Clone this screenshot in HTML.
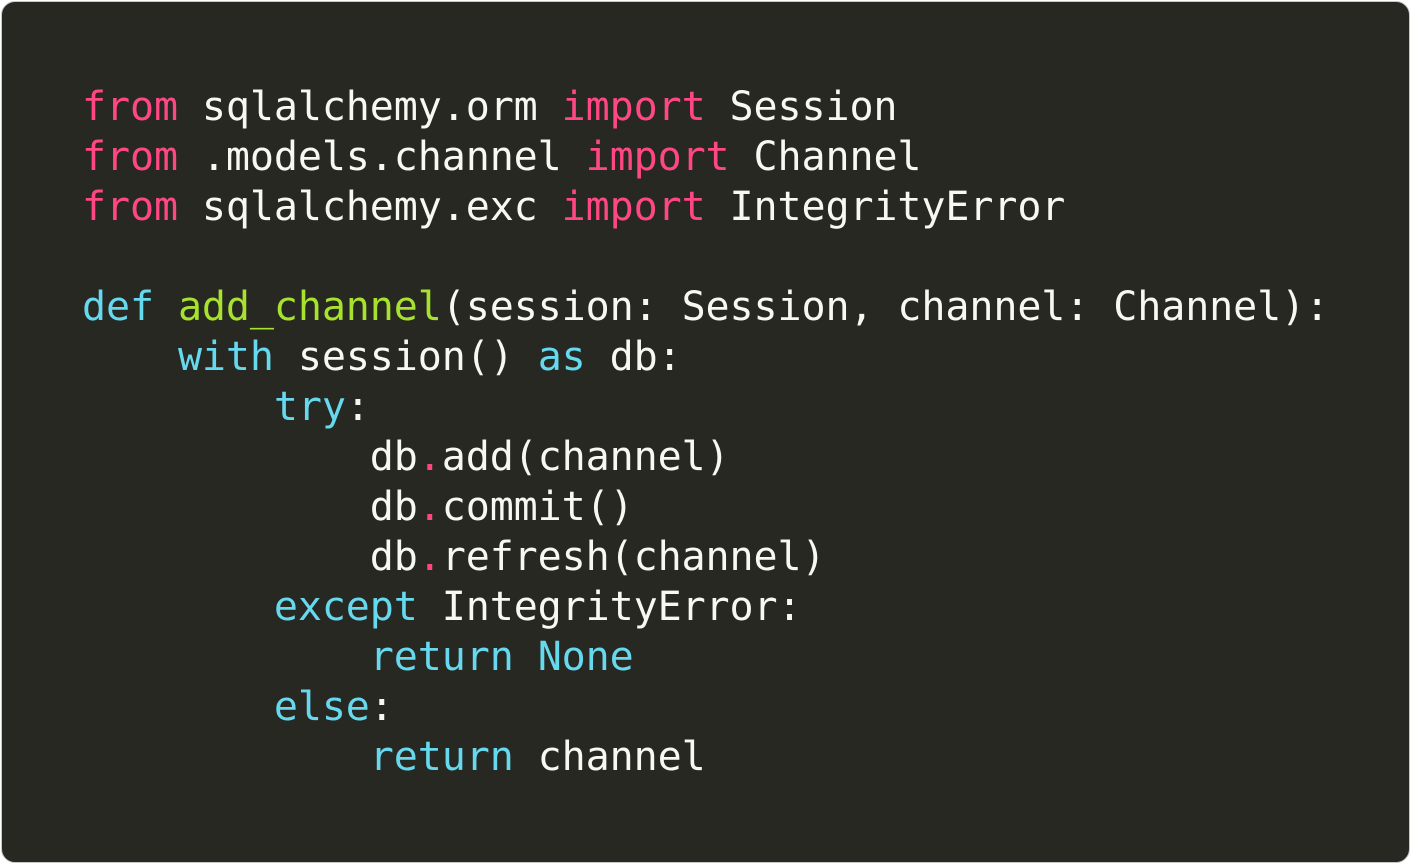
<!DOCTYPE html>
<html><head><style>
html,body{margin:0;padding:0;background:#fff;}
.box{position:absolute;left:1px;top:1px;width:1409px;height:862px;background:#272822;border:1px solid #c8c8c8;border-radius:14px;box-sizing:border-box;}
pre{position:absolute;left:82px;top:82px;margin:0;font-family:"DejaVu Sans Mono","Liberation Mono",monospace;font-size:40px;letter-spacing:-0.1px;line-height:50px;color:#f8f8f2;}
.k{color:#ff4785}.c{color:#66d9ef}.g{color:#a6e22e}
</style></head><body>
<div class="box"></div>
<pre><span class="k">from</span> sqlalchemy.orm <span class="k">import</span> Session
<span class="k">from</span> .models.channel <span class="k">import</span> Channel
<span class="k">from</span> sqlalchemy.exc <span class="k">import</span> IntegrityError

<span class="c">def</span> <span class="g">add_channel</span>(session: Session, channel: Channel):
    <span class="c">with</span> session() <span class="c">as</span> db:
        <span class="c">try</span>:
            db<span class="k">.</span>add(channel)
            db<span class="k">.</span>commit()
            db<span class="k">.</span>refresh(channel)
        <span class="c">except</span> IntegrityError:
            <span class="c">return</span> <span class="c">None</span>
        <span class="c">else</span>:
            <span class="c">return</span> channel</pre>
</body></html>
